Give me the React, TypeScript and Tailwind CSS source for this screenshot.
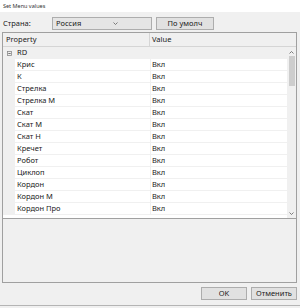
import React from "react";

const rows = [
  "Крис",
  "К",
  "Стрелка",
  "Стрелка М",
  "Скат",
  "Скат М",
  "Скат Н",
  "Кречет",
  "Робот",
  "Циклоп",
  "Кордон",
  "Кордон М",
  "Кордон Про",
];

function Chevron({ down }: { down?: boolean }) {
  return (
    <svg width="5" height="3" viewBox="0 0 5 3" className="mx-auto">
      <path
        d={down ? "M0.5 0.5 L2.5 2.5 L4.5 0.5" : "M0.5 2.5 L2.5 0.5 L4.5 2.5"}
        fill="none"
        stroke="#606060"
        strokeWidth="0.8"
      />
    </svg>
  );
}

function Row({ name }: { name: string }) {
  return (
    <div className="flex h-[12px]">
      <div className="w-[12px] bg-[#f0f0f0]" />
      <div className="flex w-[135px] items-center border-b border-[#f0f0f0] bg-white pl-[2px]">
        {name}
      </div>
      <div className="w-[1px] bg-[#f0f0f0]" />
      <div className="flex w-[136px] items-center border-b border-[#f0f0f0] bg-white pl-[1px]">
        Вкл
      </div>
    </div>
  );
}

export default function App() {
  return (
    <div
      className="flex h-[308px] w-[300px] flex-col bg-[#f0f0f0] text-[7.5px] text-[#1a1a1a]"
      style={{ fontFamily: '"Noto Sans", "Liberation Sans", sans-serif' }}
    >
      <div className="h-[12px] bg-white pl-[3px] text-[5.5px] leading-[12px] text-[#333]">
        Set Menu values
      </div>

      <div className="mt-[5px] flex h-[13px] items-center">
        <div className="w-[52px] pl-[3px]">Страна:</div>
        <div className="flex h-full w-[100px] items-center justify-between border border-[#adadad] bg-[#e5e5e5] pl-[3px] pr-[2px]">
          <span>Россия</span>
          <Chevron down />
        </div>
        <div className="ml-[4px] flex h-full w-[58px] items-center justify-center border border-[#adadad] bg-[#e1e1e1]">
          По умолч
        </div>
      </div>

      <div className="ml-[2px] mt-[2px] flex h-[251px] w-[295px] flex-col border border-[#a0a0a0]">
        <div className="flex h-[14px] border-b border-[#d5d5d5] bg-[#f0f0f0]">
          <div className="flex w-[147px] items-center border-r border-[#d5d5d5] pl-[3px]">
            Property
          </div>
          <div className="flex flex-1 items-center pl-[2px]">Value</div>
        </div>

        <div className="flex h-[171px] bg-white">
          <div className="flex flex-col">
            <div className="flex h-[12px] items-center bg-[#f0f0f0]">
              <div className="flex w-[12px] justify-center">
                <svg width="5" height="5" viewBox="0 0 5 5">
                  <rect x="0.5" y="0.5" width="4" height="4" fill="none" stroke="#8a8a8a" strokeWidth="0.8" />
                  <path d="M1.3 2.5 H3.7" stroke="#555" strokeWidth="0.8" />
                </svg>
              </div>
              <div className="w-[272px] pl-[2px]">RD</div>
            </div>
            {rows.map((r) => (
              <Row key={r} name={r} />
            ))}
          </div>
          <div className="flex w-[9px] flex-col bg-[#f0f0f0] py-[2px]">
            <div className="flex h-[6px] items-center">
              <Chevron />
            </div>
            <div className="mx-auto mt-[1px] h-[30px] w-[6px] bg-[#cdcdcd]" />
            <div className="flex-1" />
            <div className="flex h-[6px] items-center">
              <Chevron down />
            </div>
          </div>
        </div>

        <div className="flex-1 border-t border-[#a0a0a0] bg-[#f0f0f0]" />
      </div>

      <div className="mt-[4px] flex justify-end gap-[4px] pr-[3px]">
        <div className="flex h-[13px] w-[46px] items-center justify-center border border-[#adadad] bg-[#e1e1e1]">
          OK
        </div>
        <div className="flex h-[13px] w-[46px] items-center justify-center border border-[#adadad] bg-[#e1e1e1]">
          Отменить
        </div>
      </div>

      <div className="mt-auto mb-[2px] h-[1px] bg-[#b4b4b4]" />
    </div>
  );
}
